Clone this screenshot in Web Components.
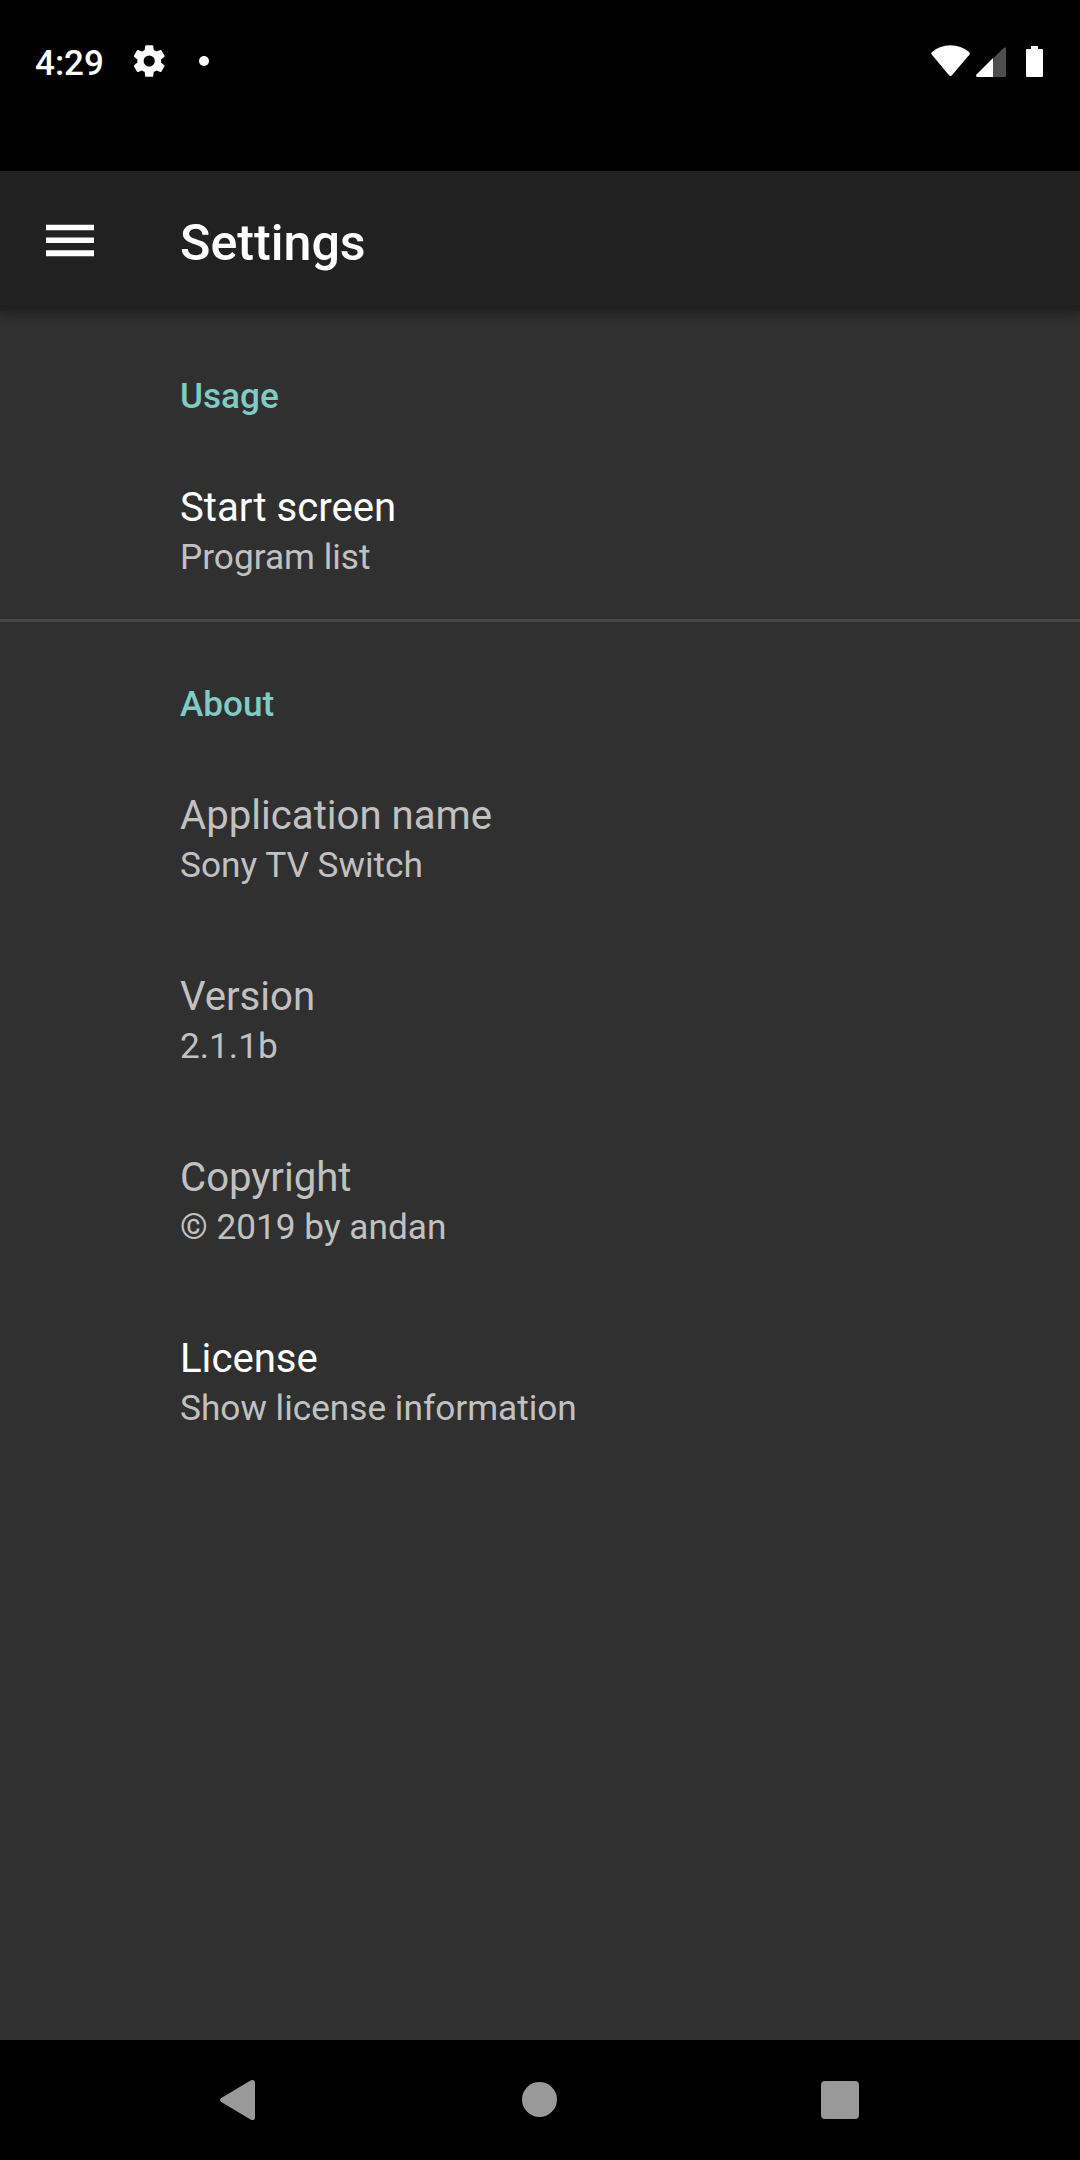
<!DOCTYPE html>
<html lang="en"><head><meta charset="utf-8"><title>Settings</title>
<style>html,body{margin:0;background:#303030}</style></head><body><settings-screen></settings-screen>
<script>
const define=(name,html)=>customElements.define(name,class extends HTMLElement{
 constructor(){super();this.attachShadow({mode:'open'}).innerHTML=html;}
});
define('status-bar',`<style>:host{display:flex;height:171px;background:#000;box-sizing:border-box;padding:30px 36px 0 35px;align-items:flex-start;justify-content:space-between}
.g{display:flex;height:64px;align-items:center}.time{font:500 35px/64px Roboto,sans-serif;width:96px;padding-top:3px}svg{display:block}</style>
<div class="g"><span class="time">4:29</span>
<svg width="90" height="64" viewBox="131 30 90 64" fill="#fff"><path transform="translate(129.4 41.2) scale(1.65)" d="M19.14 12.94c.04-.3.06-.61.06-.94 0-.32-.02-.64-.07-.94l2.03-1.58c.18-.14.23-.41.12-.61l-1.92-3.32c-.12-.22-.37-.29-.59-.22l-2.39.96c-.5-.38-1.03-.7-1.62-.94l-.36-2.54c-.04-.24-.24-.41-.48-.41h-3.84c-.24 0-.43.17-.47.41l-.36 2.54c-.59.24-1.13.57-1.62.94l-2.39-.96c-.22-.08-.47 0-.59.22L2.74 8.87c-.12.21-.08.47.12.61l2.03 1.58c-.05.3-.09.63-.09.94s.02.64.07.94l-2.03 1.58c-.18.14-.23.41-.12.61l1.92 3.32c.12.22.37.29.59.22l2.39-.96c.5.38 1.03.7 1.62.94l.36 2.54c.05.24.24.41.48.41h3.84c.24 0 .44-.17.47-.41l.36-2.54c.59-.24 1.13-.56 1.62-.94l2.39.96c.22.08.47 0 .59-.22l1.92-3.32c.12-.22.07-.47-.12-.61l-2.01-1.58zM12 15.4a3.4 3.4 0 1 1 0-6.8 3.4 3.4 0 0 1 0 6.8z"/><circle cx="204" cy="61" r="5"/></svg></div>
<div class="g"><svg width="114" height="64" viewBox="930 30 114 64" fill="#fff"><path d="M932 52Q940 45.300 950.5 45.300T969 52Q970.600 53 969.500 54.500L952 75.300Q950.500 76.700 949 75.300L931.700 54.500Q930.500 53 932 52Z"/><path fill="#4d4d4d" d="M993 58.500L1003.500 48Q1006 46 1006 49V75.500Q1006 77 1004.500 77H993Z"/><path d="M993 58V77H977Q975.200 76 976.500 74.500Z"/><path d="M1031 46h7v3h4q1 0 1 1v26q0 1-1 1h-15q-1 0-1-1v-26q0-1 1-1h4z"/></svg></div>`);
define('app-bar',`<style>:host{display:flex;height:140px;background:#212121;align-items:center;position:relative;z-index:1;box-shadow:0 4px 9px rgba(0,0,0,.3)}
svg{display:block;margin-left:46px;margin-right:86px}h1{margin:3px 0 0;font:500 50.2px/58px Roboto,sans-serif}</style><svg width="48" height="34" fill="#fff"><path d="M0 .7h48v5.500H0zM0 13.500h48v5.500H0zM0 26.300h48v6H0z"/></svg><h1><slot></slot></h1>`);
define('settings-group',`<style>:host{display:block}h2{margin:0;padding:64px 0 0 180px;height:127px;box-sizing:border-box;font:500 35.15px/42px Roboto,sans-serif;color:#80cbc4}</style><h2><slot name="heading"></slot></h2><slot></slot>`);
define('setting-item',`<style>:host{display:block;box-sizing:border-box;height:181px;padding:43px 0 0 180px;color:#fff}:host([disabled]){color:#c1c1c1}
.t{font:400 40.15px/53px Roboto,sans-serif}.s{font:400 35.22px/46px Roboto,sans-serif;color:#c1c1c1}</style><div class="t"><slot name="title"></slot></div><div class="s"><slot></slot></div>`);
define('nav-bar',`<style>:host{display:block;height:120px;background:#000}svg{display:block}</style><svg width="1080" height="120" viewBox="0 2040 1080 120" fill="#999"><path d="M221.200 2098L251 2080.300Q255 2079 255 2082.500V2117.500Q255 2121 251 2119.700L221.200 2102Q218.800 2100 221.200 2098Z"/><circle cx="539.5" cy="2099.5" r="17.5"/><rect x="821" y="2081" width="38" height="38" rx="4"/></svg>`);
define('settings-screen',`<style>:host{display:flex;flex-direction:column;width:1080px;height:2160px;background:#303030;color:#fff}main{flex:1}hr{margin:0 0 -3px;border:0;height:3px;background:#474747}</style>
<status-bar></status-bar><app-bar>Settings</app-bar><main>
<settings-group><span slot="heading">Usage</span><setting-item><span slot="title">Start screen</span>Program list</setting-item></settings-group><hr>
<settings-group><span slot="heading">About</span><setting-item disabled><span slot="title">Application name</span>Sony TV Switch</setting-item><setting-item disabled><span slot="title">Version</span>2.1.1b</setting-item><setting-item disabled><span slot="title">Copyright</span>© 2019 by andan</setting-item><setting-item><span slot="title">License</span>Show license information</setting-item></settings-group></main><nav-bar></nav-bar>`);
</script></body></html>
